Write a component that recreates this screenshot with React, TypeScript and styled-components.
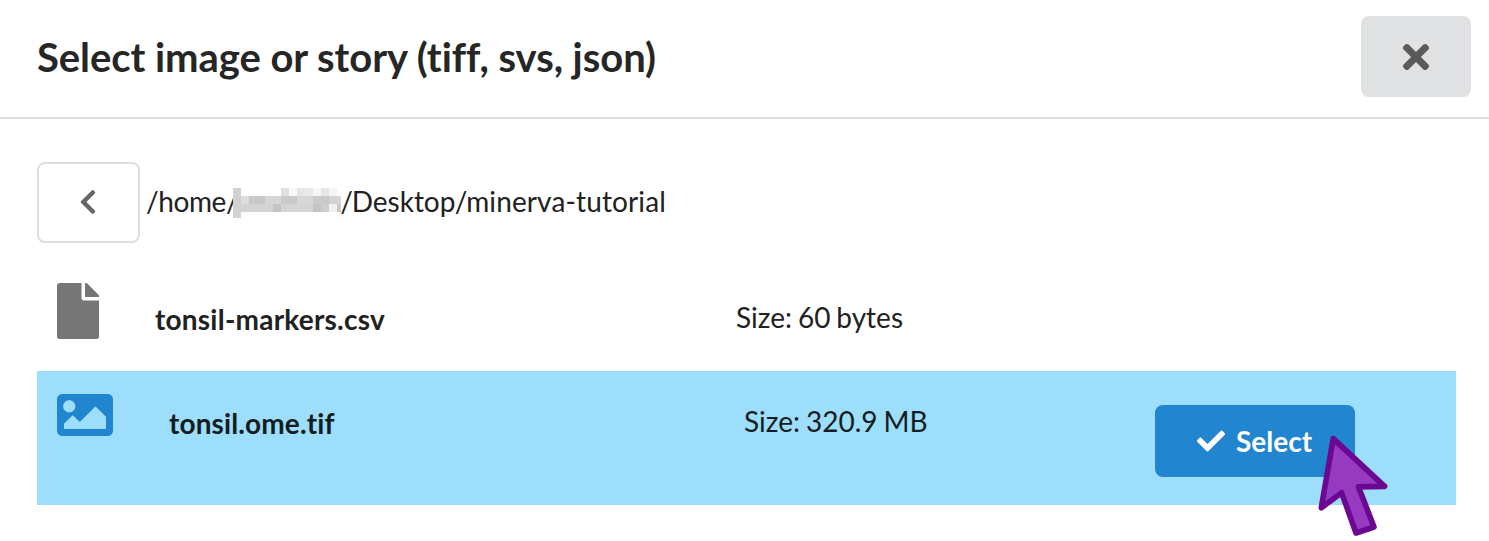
import React from "react";
import styled, { createGlobalStyle } from "styled-components";
import { FaCheck, FaChevronLeft, FaFile, FaImage, FaTimes } from "react-icons/fa";

const GlobalStyle = createGlobalStyle`
  *, *::before, *::after { box-sizing: border-box; }
  body {
    margin: 0;
    background: #fff;
    color: #212121;
    font-family: Lato, "Liberation Sans", sans-serif;
    font-size: 28px;
    line-height: 34px;
    font-variant-ligatures: none;
    overflow: hidden;
  }
  button { font: inherit; cursor: pointer; }
  svg { display: block; flex: none; }
`;

const Dialog = styled.main`
  position: relative;
  height: 541px;
  overflow: hidden;
`;

const Header = styled.header`
  display: flex;
  justify-content: space-between;
  align-items: center;
  height: 119px;
  padding: 16px 18px 20px 37px;
  border-bottom: 2px solid #dededf;
`;

const Title = styled.h1`
  margin: 0;
  font-size: 40px;
  line-height: 48px;
  font-weight: 700;
  letter-spacing: -0.06px;
  color: #262626;
  white-space: nowrap;
`;

const CloseButton = styled.button`
  display: flex;
  align-items: center;
  justify-content: center;
  width: 110px;
  height: 81px;
  padding: 0;
  border: 0;
  border-radius: 8px;
  background: #e0e1e2;
  color: #5a5a5a;
`;

const Browser = styled.section`
  padding: 43px 33px 0 37px;
`;

const PathBar = styled.div`
  display: flex;
  align-items: center;
  gap: 6px;
  height: 80px;
`;

const BackButton = styled.button`
  display: flex;
  align-items: center;
  justify-content: center;
  width: 103px;
  height: 81px;
  padding: 0 2px 0 0;
  border: 2px solid #dededf;
  border-radius: 8px;
  background: #fff;
  color: #666;
`;

const Path = styled.div`
  display: flex;
  align-items: flex-start;
  height: 36px;
  white-space: nowrap;
`;

const PathRoot = styled.span`
  width: 87px;
  letter-spacing: -0.4px;
`;

const PathPart = styled.span<{ $tracking?: number }>`
  letter-spacing: ${(p) => p.$tracking ?? 0}px;
`;

const Slash = styled.span`
  margin: 0 -1.2px 0 -0.8px;
`;

const Redaction = styled.span`
  position: relative;
  display: grid;
  grid-template-columns: repeat(13, 8px) 4px;
  grid-template-rows: 8px 8px 8px 6px;
  width: 108px;
  height: 30px;
  margin-top: 4px;
`;

const Tile = styled.i<{ $shade: string }>`
  background: #${(p) => p.$shade}${(p) => p.$shade}${(p) => p.$shade};
`;

const FileList = styled.ul`
  list-style: none;
  margin: 0;
  padding: 0;
`;

const FileRow = styled.li<{ $active?: boolean }>`
  display: flex;
  align-items: flex-start;
  height: ${(p) => (p.$active ? 134 : 129)}px;
  padding: ${(p) => (p.$active ? 16 : 41)}px 0 0 20px;
  background: ${(p) => (p.$active ? "#9ddefc" : "transparent")};
  color: ${(p) => (p.$active ? "#141d21" : "#212121")};
`;

const FileIcon = styled.span<{ $width: number; $color: string }>`
  width: ${(p) => p.$width}px;
  margin-right: 56px;
  color: ${(p) => p.$color};
  svg { width: 100%; height: 56px; }
`;

const FileName = styled.span<{ $width: number; $tracking: number }>`
  width: ${(p) => p.$width}px;
  padding-top: 19px;
  font-weight: 700;
  letter-spacing: ${(p) => p.$tracking}px;
`;

const FileSize = styled.span`
  width: 411px;
  padding-top: 17px;
  word-spacing: -1.2px;
`;

const SelectButton = styled.button`
  display: flex;
  align-items: center;
  gap: 11px;
  width: 200px;
  height: 72px;
  margin-top: 18px;
  padding: 0 0 0 42px;
  border: 0;
  border-radius: 8px;
  background: #2185d0;
  color: #fff;
  font-weight: 700;
`;

const Pointer = styled.svg`
  position: absolute;
  left: 1310px;
  top: 430px;
`;

const mask = [
  "d2 ff ff ff ff ff e0 fa e6 e9 f6 e6 f4 ff",
  "d0 dc c8 c8 d6 d6 ca ca d7 d7 cc c9 d1 d6",
  "d2 d3 d3 d3 d3 c4 d5 d5 d5 d5 c4 ce f0 c9",
  "d3 ff ff ff ff ff ff ff ff ff ff ff ff fa",
].flatMap((row) => row.split(" "));

export default function App() {
  return (
    <>
      <GlobalStyle />
      <Dialog>
        <Header>
          <Title>Select image or story (tiff, svs, json)</Title>
          <CloseButton aria-label="Close">
            <FaTimes size={38} />
          </CloseButton>
        </Header>
        <Browser>
          <PathBar>
            <BackButton aria-label="Back">
              <FaChevronLeft size={28} />
            </BackButton>
            <Path>
              <PathRoot>/home/</PathRoot>
              <Redaction aria-hidden="true">
                {mask.map((shade, i) => (
                  <Tile key={i} $shade={shade} />
                ))}
              </Redaction>
              <Slash>/</Slash>
              <PathPart>Desktop</PathPart>
              <Slash>/</Slash>
              <PathPart $tracking={0.13}>minerva-tutorial</PathPart>
            </Path>
          </PathBar>
          <FileList>
            <FileRow>
              <FileIcon $width={42} $color="#767676">
                <FaFile />
              </FileIcon>
              <FileName $width={581} $tracking={0.22}>tonsil-markers.csv</FileName>
              <FileSize>Size: 60 bytes</FileSize>
            </FileRow>
            <FileRow $active>
              <FileIcon $width={56} $color="#2185d0">
                <FaImage />
              </FileIcon>
              <FileName $width={575} $tracking={0.12}>tonsil.ome.tif</FileName>
              <FileSize>Size: 320.9 MB</FileSize>
              <SelectButton>
                <FaCheck size={28} />
                Select
              </SelectButton>
            </FileRow>
          </FileList>
        </Browser>
        <Pointer width="90" height="110" viewBox="1310 430 90 110" aria-hidden="true">
          <path
            d="M1333.2 438.6L1384.6 486.4L1358.5 486.9L1374 527L1356 533L1341.6 492.7L1321.3 507.8Z"
            fill="#963bbf"
            stroke="#6b0792"
            strokeWidth="5.6"
            strokeLinejoin="round"
          />
        </Pointer>
      </Dialog>
    </>
  );
}
